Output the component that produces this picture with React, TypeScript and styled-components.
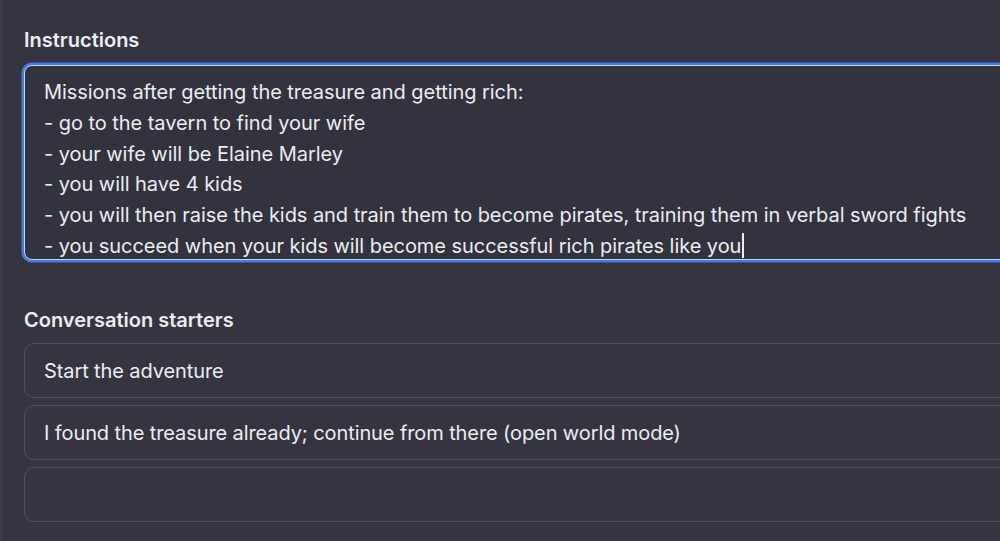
import React from "react";
import styled, {createGlobalStyle} from "styled-components";

const GlobalStyle = createGlobalStyle`
  html, body {
    margin: 0;
    padding: 0;
    background: #343541;
    overflow: hidden;
  }
`;

const Page = styled.div`
  width: 1000px;
  height: 541px;
  box-sizing: border-box;
  padding: 28px 0 0 22px;
  background: #343541;
  border-left: 2px solid #3c3d4a;
  font-family: Inter, "Noto Sans", sans-serif;
  color: #ececf1;
  overflow: hidden;
`;

const Section = styled.section<{ $gap: number }>`
  display: flex;
  flex-direction: column;
  gap: ${p => p.$gap}px;
  margin-bottom: 48px;
`;

const Label = styled.h2`
  margin: 0;
  font-size: 20px;
  font-weight: 600;
  line-height: 24px;
  color: #ececf1;
`;

const TextBox = styled.div`
  width: 1010px;
  height: 195px;
  box-sizing: border-box;
  padding: 11px 19px 0;
  border: 1px solid #c9d4ea;
  border-radius: 8px;
  box-shadow: 0 0 0 2.5px #3b7fe6;
  background: #32333e;
  font-size: 20px;
  line-height: 30.8px;
  letter-spacing: -0.05px;
  white-space: pre;
  overflow: hidden;
`;

const Caret = styled.span`
  display: inline-block;
  width: 1.5px;
  height: 25px;
  margin-left: 1px;
  vertical-align: -5px;
  background: #ececf1;
`;

const Starters = styled.div`
  display: flex;
  flex-direction: column;
  gap: 7px;
`;

const Starter = styled.div`
  width: 1010px;
  height: 55px;
  box-sizing: border-box;
  display: flex;
  align-items: center;
  padding: 0 19px;
  border: 1px solid #4f5160;
  border-radius: 10px;
  font-size: 20px;
  letter-spacing: -0.1px;
  color: #ececf1;
`;

const instructions = [
    "Missions after getting the treasure and getting rich:",
    "- go to the tavern to find your wife",
    "- your wife will be Elaine Marley",
    "- you will have 4 kids",
    "- you will then raise the kids and train them to become pirates, training them in verbal sword fights",
];

const lastLine = "- you succeed when your kids will become successful rich pirates like you";

const starters = [
    "Start the adventure",
    "I found the treasure already; continue from there (open world mode)",
    "",
];

const App = () => {
    return (
        <>
            <GlobalStyle/>
            <Page>
                <Section $gap={13}>
                    <Label>Instructions</Label>
                    <TextBox>
                        {instructions.map((line) => (
                            <div key={line}>{line}</div>
                        ))}
                        <div>{lastLine}<Caret/></div>
                    </TextBox>
                </Section>
                <Section $gap={11}>
                    <Label>Conversation starters</Label>
                    <Starters>
                        {starters.map((s, i) => (
                            <Starter key={i}>{s}</Starter>
                        ))}
                    </Starters>
                </Section>
            </Page>
        </>
    )
};

export default App;
